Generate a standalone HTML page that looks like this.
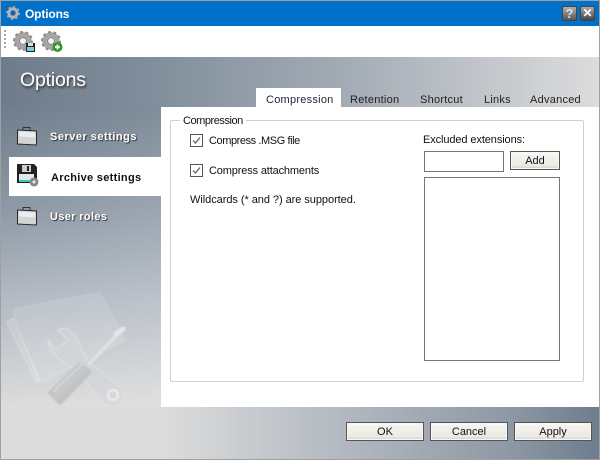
<!DOCTYPE html>
<html><head><meta charset="utf-8"><title>Options</title>
<style>
html,body{margin:0;padding:0}
body{width:600px;height:460px;position:relative;overflow:hidden;background:#a0a0a0;font:11px "Liberation Sans",sans-serif;color:#111}
.a,.t{position:absolute;box-sizing:border-box}
.t{white-space:nowrap;line-height:14px}
.btn{position:absolute;box-sizing:border-box;border:1px solid #555;background:linear-gradient(#fff 0,#f4f3ef 15%,#eceae5 80%,#d0cec8 100%);text-align:center;line-height:19px;font-size:11px;color:#111;box-shadow:inset 0 0 0 1px #f8f7f4}
.nav{color:#fff;font-weight:bold;text-shadow:1px 1px 1px #333}
.cb{position:absolute;box-sizing:border-box;width:13px;height:13px;border:1px solid #555;background:#fff}
.tab{color:#222;letter-spacing:.25px}
</style></head><body>
<!-- title bar -->
<div class="a" style="left:1px;top:1px;width:598px;height:25px;background:#0070c9"></div>
<svg class="a" style="left:6px;top:6px" width="14" height="14" viewBox="0 0 14 14"><circle cx="7" cy="7" r="4.200" fill="none" stroke="#b4b4b4" stroke-width="3"/><circle cx="7" cy="7" r="6" fill="none" stroke="#a8a8a8" stroke-width="2" stroke-dasharray="2 2.700"/><circle cx="7" cy="7" r="2.200" fill="#1c5f9a"/></svg>
<div class="t" style="left:25px;top:7px;color:#fff;font-weight:bold;font-size:12px;letter-spacing:-.15px">Options</div>
<div class="a" style="left:562px;top:6px;width:15px;height:15px;border-radius:2px;background:linear-gradient(#b0b0b0,#555);border:1px solid #444;color:#ddd;font:bold 13px/14px 'Liberation Sans',sans-serif;text-align:center">?</div>
<div class="a" style="left:580px;top:6px;width:15px;height:15px;border-radius:2px;background:linear-gradient(#aaa,#444);border:1px solid #444;color:#fff;font:bold 12px/13px 'Liberation Sans',sans-serif;text-align:center">✕</div>

<!-- toolbar -->
<div class="a" style="left:1px;top:26px;width:598px;height:31px;background:#fff"></div>
<div class="a" style="left:4px;top:30px;width:2px;height:19px;background:repeating-linear-gradient(#aaa 0 2px,#fff 2px 4px)"></div>
<svg class="a" style="left:13px;top:31px" width="23" height="22" viewBox="0 0 23 22">
<circle cx="10" cy="10" r="6.500" fill="none" stroke="#a4a4a4" stroke-width="4.500"/><circle cx="10" cy="10" r="9" fill="none" stroke="#8c8c8c" stroke-width="2" stroke-dasharray="2.800 2.800"/><circle cx="10" cy="10" r="3.500" fill="#f4f4f4" stroke="#777"/>
<rect x="13" y="12" width="9" height="9" fill="#223"/><rect x="14" y="16" width="7" height="4" fill="#7cd"/><rect x="15" y="12" width="5" height="3" fill="#ddd"/></svg>
<svg class="a" style="left:41px;top:31px" width="23" height="22" viewBox="0 0 23 22">
<circle cx="10" cy="10" r="6.500" fill="none" stroke="#a4a4a4" stroke-width="4.500"/><circle cx="10" cy="10" r="9" fill="none" stroke="#8c8c8c" stroke-width="2" stroke-dasharray="2.800 2.800"/><circle cx="10" cy="10" r="3.500" fill="#f4f4f4" stroke="#777"/>
<circle cx="16.500" cy="16" r="5" fill="#2a9a2a"/><path d="M14 16h5M16.500 13.500v5" stroke="#fff" stroke-width="1.800"/></svg>

<!-- backgrounds -->
<div class="a" style="left:1px;top:57px;width:598px;height:50px;background:linear-gradient(90deg,#6e7c8b 0,#82909d 27%,#a6aeb7 60%,#dcdcdc 100%)"></div>
<div class="a" style="left:1px;top:107px;width:160px;height:300px;background:linear-gradient(90deg,rgba(255,255,255,0),rgba(255,255,255,.12)),linear-gradient(#6f7d8c 0,#8e9aa7 35%,#b4bbc4 65%,#dcdcdc 100%)"></div>
<div class="a" style="left:1px;top:407px;width:598px;height:52px;background:linear-gradient(90deg,#dcdcdc 0,#dcdcdc 27%,#b5bbc2 55%,#8f9aa6 84%,#6d7d8d 100%)"></div>

<div class="t" style="left:20px;top:68px;font-size:19.500px;line-height:24px;color:#fff;letter-spacing:-.2px;text-shadow:1px 2px 2px #333">Options</div>

<svg class="a" style="left:16px;top:126px" width="23" height="21" viewBox="0 0 23 21"><path d="M7 4V1.500h7V4" fill="none" stroke="#333"/><path d="M1.500 4l19 1v14l-19-1z" fill="#d4d4d4" stroke="#2a2a2a"/><path d="M3 5.500l16 1v5l-16-1z" fill="#ececec"/></svg>
<div class="t nav" style="left:50px;top:130px;letter-spacing:.5px">Server settings</div>

<div class="a" style="left:9px;top:157px;width:152px;height:39px;background:#fff"></div>
<svg class="a" style="left:16px;top:163px" width="24" height="24" viewBox="0 0 24 24"><path d="M1 1h17l3 3v16H1z" fill="#222"/><rect x="6" y="2" width="9" height="7" fill="#ccc"/><rect x="11" y="3" width="2" height="5" fill="#222"/><rect x="3" y="11" width="15" height="8" fill="#dfe8f0"/><rect x="3" y="17" width="15" height="2" fill="#3cb"/><circle cx="18" cy="19" r="4.500" fill="#888"/><circle cx="18" cy="19" r="1.500" fill="#eee"/></svg>
<div class="t" style="left:51px;top:171px;font-weight:bold;color:#111;letter-spacing:.3px">Archive settings</div>

<svg class="a" style="left:16px;top:206px" width="23" height="21" viewBox="0 0 23 21"><path d="M7 4V1.500h7V4" fill="none" stroke="#333"/><path d="M1.500 4l19 1v14l-19-1z" fill="#d4d4d4" stroke="#2a2a2a"/><path d="M3 5.500l16 1v5l-16-1z" fill="#ececec"/></svg>
<div class="t nav" style="left:50px;top:210px;letter-spacing:.35px">User roles</div>

<!-- watermark -->
<svg class="a" style="left:0;top:285px" width="161" height="122" viewBox="0 285 161 122">
<defs><linearGradient id="h" x1="0" y1="0" x2="1" y2="1"><stop offset="0" stop-color="#b0b2b4"/><stop offset=".5" stop-color="#c6c8ca"/><stop offset="1" stop-color="#a8aaac"/></linearGradient></defs>
<g style="filter:blur(.5px)">
<path d="M13 313Q13 309 18 308L100 292L125 340L43 382Q39 383 38 380Z" fill="#fff" fill-opacity=".11" stroke="#fff" stroke-opacity=".16"/>
<path d="M6 322L13 318L40 381L36 382Z" fill="#fff" fill-opacity=".15" stroke="#fff" stroke-opacity=".22"/>
<path d="M48 339L55 350L68 340L58 330L67 328L75 335L82 350L87 360L120 387A10 10 0 0 1 103 403L78 372L58 358L50 350Z" fill="#d4d6d8" fill-opacity=".55" stroke="#e0e1e3"/>
<circle cx="113" cy="395" r="5" fill="none" stroke="#eceded" stroke-width="2"/>
<path d="M120 332L88 365" stroke="#dfe0e2" stroke-width="3.500"/>
<path d="M116 334L123 329" stroke="#e4e5e6" stroke-width="5" stroke-linecap="round"/>
<path d="M80 362L92 372L60 405L48 393Z" fill="url(#h)" stroke="#c4c6c8"/>
<path d="M53 392L83 363" stroke="#d0d2d4" stroke-width="3"/>
</g>
</svg>

<!-- main panel -->
<div class="a" style="left:161px;top:107px;width:438px;height:300px;background:#fff"></div>
<div class="a" style="left:256px;top:88px;width:85px;height:19px;background:#fff"></div>
<div class="t tab" style="left:266px;top:93px;color:#1c2433">Compression</div>
<div class="t tab" style="left:350px;top:93px">Retention</div>
<div class="t tab" style="left:420px;top:93px">Shortcut</div>
<div class="t tab" style="left:484px;top:93px">Links</div>
<div class="t tab" style="left:530px;top:93px">Advanced</div>

<div class="a" style="left:170px;top:120px;width:414px;height:262px;border:1px solid #d0d0d0;border-radius:2px"></div>
<div class="t" style="left:180px;top:114px;background:#fff;padding:0 3px;letter-spacing:-.45px">Compression</div>

<div class="cb" style="left:190px;top:134px"></div>
<svg class="a" style="left:190px;top:134px" width="13" height="13" viewBox="0 0 13 13"><path d="M3 6.500L5.500 9L10 3.500" fill="none" stroke="#777" stroke-width="1.500"/></svg>
<div class="t" style="left:209px;top:134px;letter-spacing:-.42px">Compress .MSG file</div>
<div class="cb" style="left:190px;top:164px"></div>
<svg class="a" style="left:190px;top:164px" width="13" height="13" viewBox="0 0 13 13"><path d="M3 6.500L5.500 9L10 3.500" fill="none" stroke="#777" stroke-width="1.500"/></svg>
<div class="t" style="left:209px;top:164px;letter-spacing:-.15px">Compress attachments</div>
<div class="t" style="left:190px;top:193px;letter-spacing:-.05px">Wildcards (* and ?) are supported.</div>

<div class="t" style="left:423px;top:133px;letter-spacing:-.1px">Excluded extensions:</div>
<div class="a" style="left:424px;top:151px;width:80px;height:21px;border:1px solid #777;background:#fff"></div>
<div class="btn" style="left:510px;top:151px;width:50px;height:19px">Add</div>
<div class="a" style="left:424px;top:177px;width:136px;height:184px;border:1px solid #777;background:#fff"></div>

<div class="btn" style="left:346px;top:422px;width:78px;height:19px">OK</div>
<div class="btn" style="left:430px;top:422px;width:78px;height:19px">Cancel</div>
<div class="btn" style="left:514px;top:422px;width:78px;height:19px">Apply</div>
</body></html>
